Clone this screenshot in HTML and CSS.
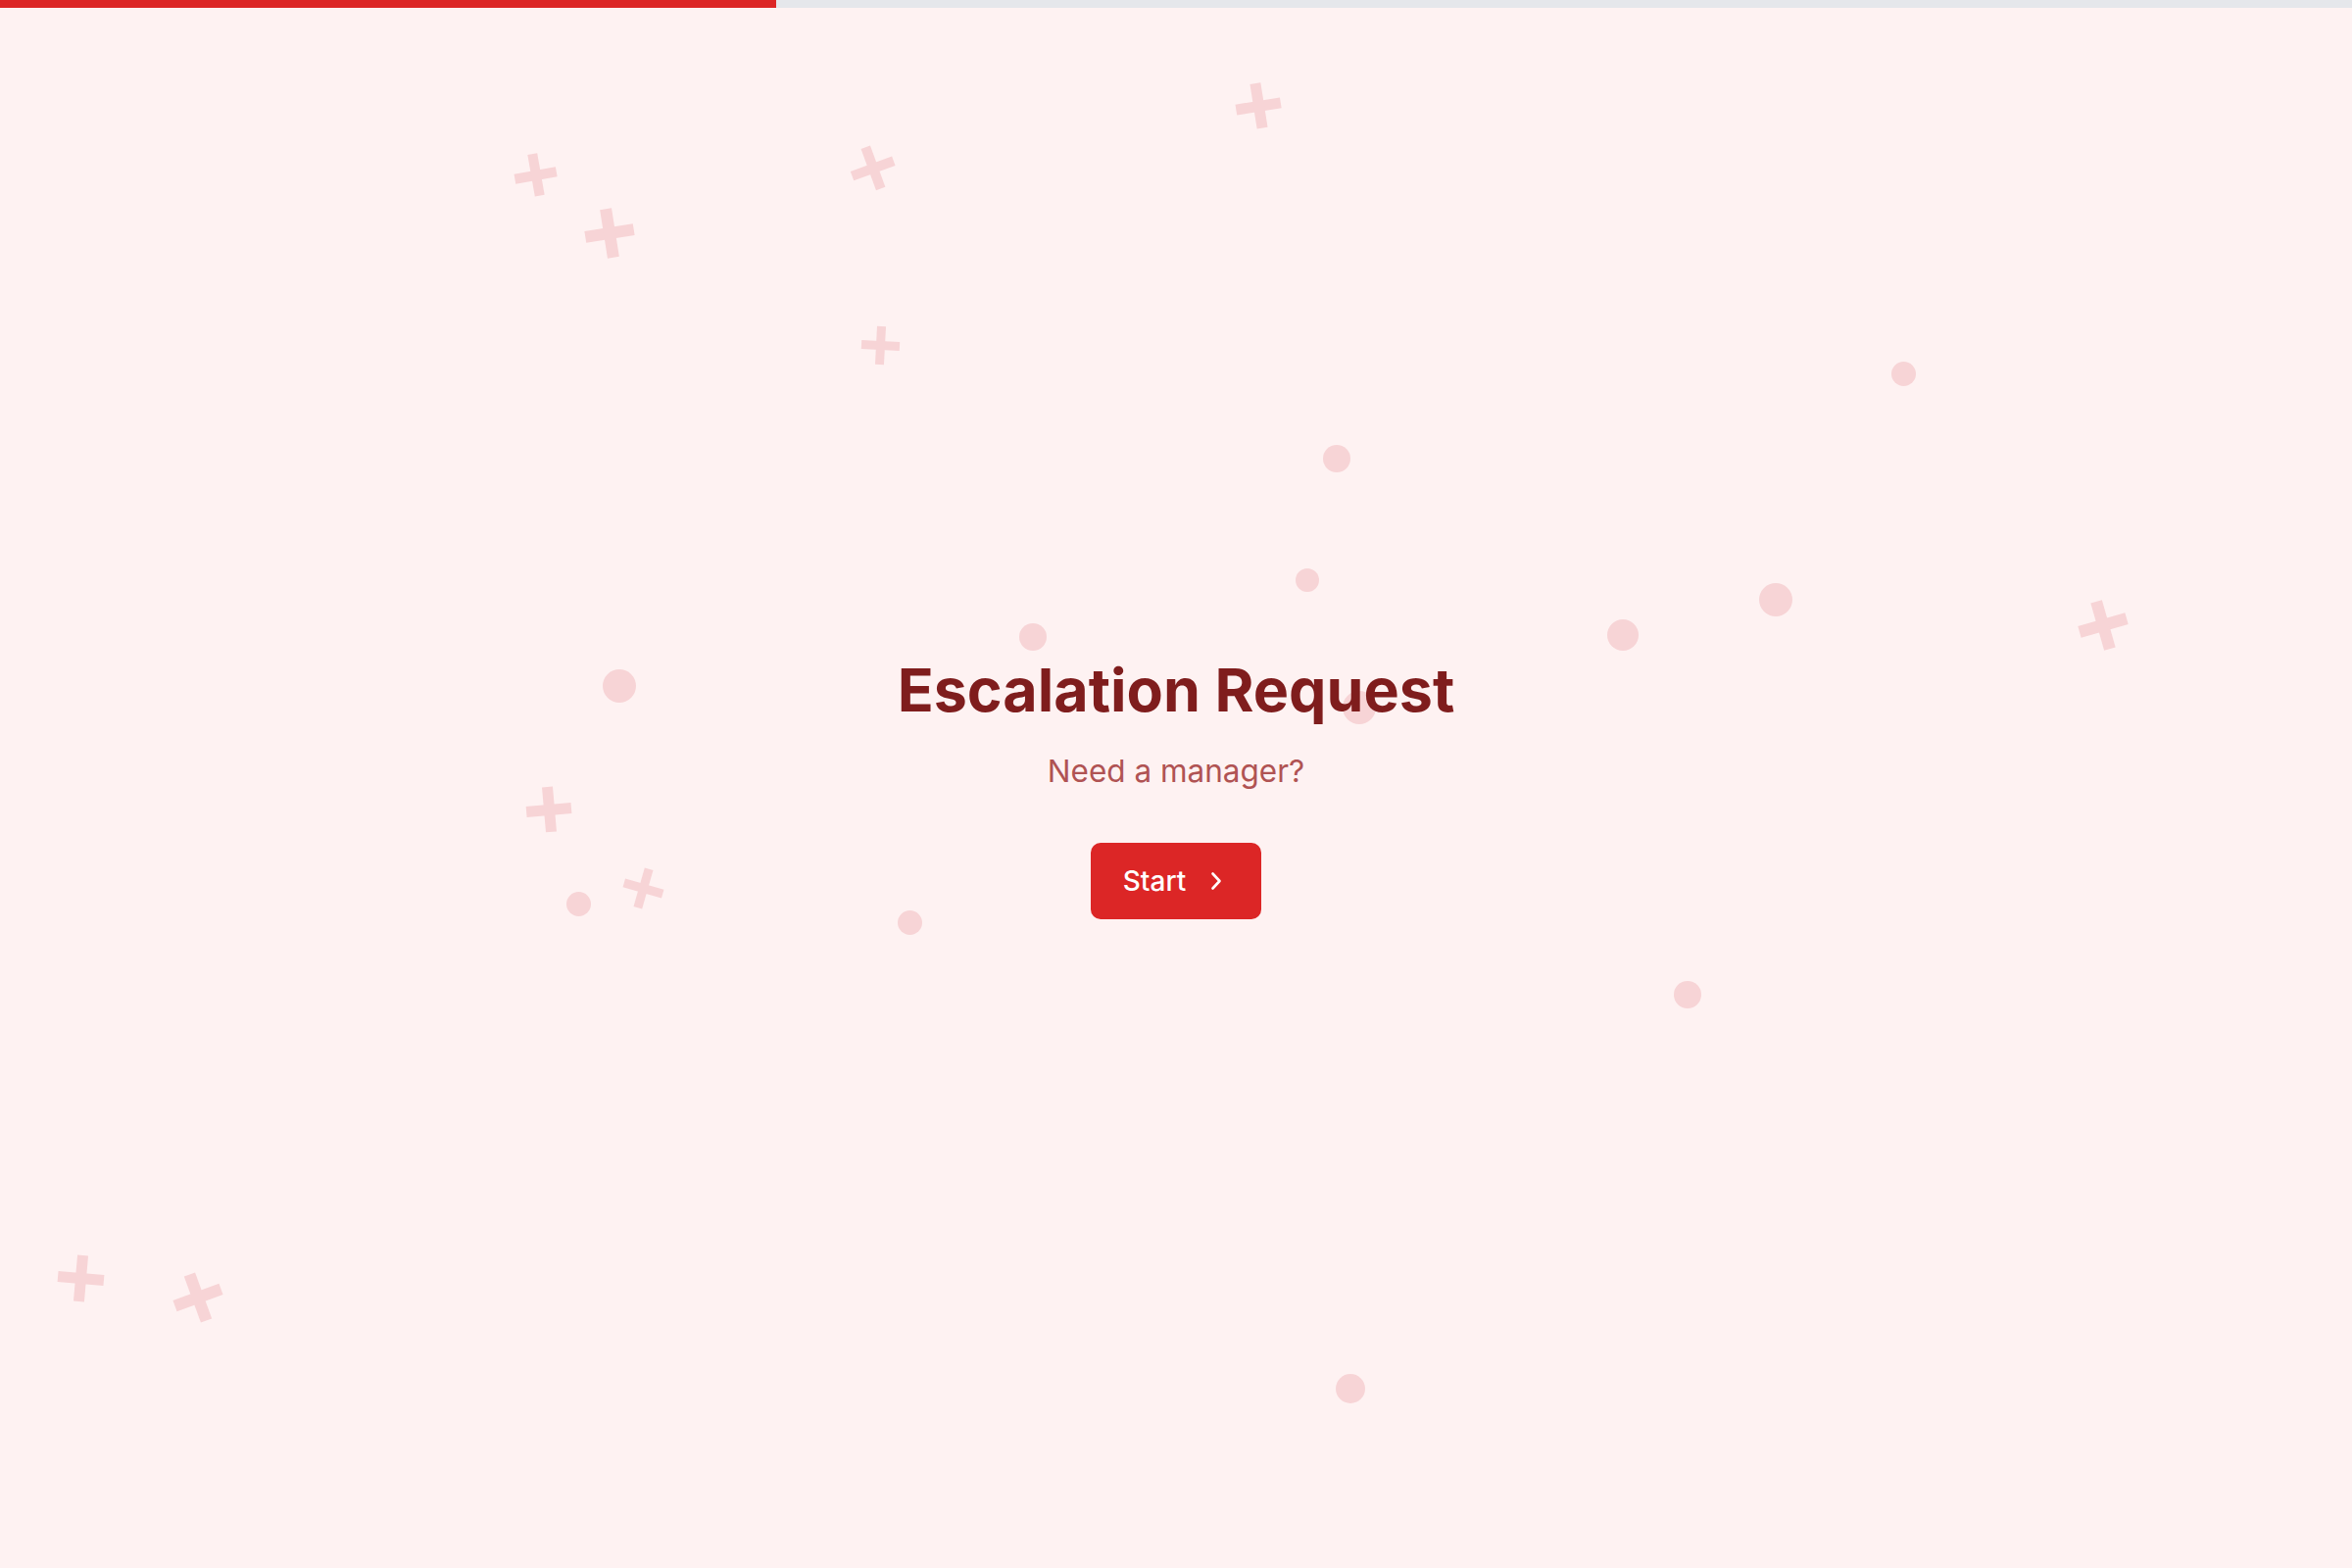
FILE: index.html
```html
<!DOCTYPE html>
<html lang="en">
<head>
  <meta charset="UTF-8">
  <title>Escalation Request</title>
  <link rel="stylesheet" href="styles.css">
</head>
<body>
  <div class="progress">
    <div class="progress-fill" id="progress-fill"></div>
  </div>

  <div class="confetti" id="confetti"></div>

  <div class="main">
    <div class="intro">
      <h1>Escalation Request</h1>
      <p class="subtitle">Need a manager?</p>
      <button class="start-btn" onclick="startForm()">
        <span>Start</span>
        <svg class="chevron" width="12" height="20" viewBox="0 0 12 20" fill="none">
          <path d="M2.5 2.5 L9.5 10 L2.5 17.5" stroke="currentColor" stroke-width="2.6" stroke-linecap="round" stroke-linejoin="round"/>
        </svg>
      </button>
    </div>
  </div>

<script>
  const progress = 33;

  // background pluses: [x, y, size, rotate]
  const crosses = [
    [546, 178, 43, -10],
    [622, 238, 50, -9],
    [890, 171, 45, -20],
    [898, 352, 39, 3],
    [1284, 108, 46, -9],
    [560, 826, 46, -5],
    [656, 906, 41, 16],
    [82, 1304, 47, 5],
    [202, 1324, 50, -20],
    [2146, 638, 50, -16]
  ];

  // background dots: [x, y, size]
  const dots = [
    [1942, 381, 25],
    [1364, 468, 28],
    [1334, 592, 24],
    [1054, 650, 28],
    [1656, 648, 32],
    [1812, 612, 34],
    [632, 700, 34],
    [1387, 722, 34],
    [590, 922, 25],
    [928, 941, 25],
    [1722, 1015, 28],
    [1378, 1417, 30]
  ];

  function drawConfetti() {
    const layer = document.getElementById('confetti');
    layer.innerHTML = '';

    crosses.forEach(([x, y, size, rot]) => {
      const bar = Math.round(size * 0.23);
      layer.insertAdjacentHTML('beforeend', `
        <div class="cross" style="left:${x - size / 2}px; top:${y - size / 2}px; width:${size}px; height:${size}px; --bar:${bar}px; transform:rotate(${rot}deg);"></div>
      `);
    });

    dots.forEach(([x, y, size]) => {
      layer.insertAdjacentHTML('beforeend', `
        <div class="dot" style="left:${x - size / 2}px; top:${y - size / 2}px; width:${size}px; height:${size}px;"></div>
      `);
    });
  }

  function startForm() {
    console.log('start escalation form');
  }

  window.onload = () => {
    document.getElementById('progress-fill').style.width = progress + '%';
    drawConfetti();
  }
</script>
</body>
</html>
```

FILE: styles.css
```css
body {
  margin: 0;
  background-color: #fef2f2;
  font-family: 'Inter', 'Roboto', sans-serif;
  min-height: 100vh;
  overflow: hidden;
}
.progress {
  position: fixed;
  top: 0;
  left: 0;
  right: 0;
  height: 8px;
  background-color: #e5e7eb;
  z-index: 10;
}
.progress-fill {
  height: 100%;
  width: 33%;
  background-color: #dc2626;
}
.confetti {
  position: absolute;
  inset: 0;
  pointer-events: none;
  z-index: 0;
}
.cross {
  position: absolute;
}
.cross::before,
.cross::after {
  content: '';
  position: absolute;
  background-color: #f7d4d6;
}
.cross::before {
  left: 0;
  right: 0;
  top: calc(50% - var(--bar) / 2);
  height: var(--bar);
}
.cross::after {
  top: 0;
  bottom: 0;
  left: calc(50% - var(--bar) / 2);
  width: var(--bar);
}
.dot {
  position: absolute;
  border-radius: 50%;
  background-color: #f7d4d6;
}
.main {
  position: relative;
  z-index: 1;
  min-height: 100vh;
  display: flex;
  align-items: center;
  justify-content: center;
}
.intro {
  display: flex;
  flex-direction: column;
  align-items: center;
  padding-top: 6px;
}
h1 {
  margin: 0;
  font-size: 61px;
  line-height: 72px;
  font-weight: 700;
  color: #7f1d1d;
}
.subtitle {
  margin: 28px 0 0;
  font-size: 31.5px;
  line-height: 38px;
  color: #b05353;
}
.start-btn {
  margin-top: 54px;
  height: 78px;
  display: flex;
  align-items: center;
  gap: 25px;
  padding: 0 40px 0 33px;
  background-color: #dc2626;
  color: white;
  border: none;
  border-radius: 10px;
  font-family: inherit;
  font-size: 28px;
  font-weight: 500;
  cursor: pointer;
}
.start-btn:hover {
  background-color: #b91c1c;
}
.chevron {
  display: block;
}
```
